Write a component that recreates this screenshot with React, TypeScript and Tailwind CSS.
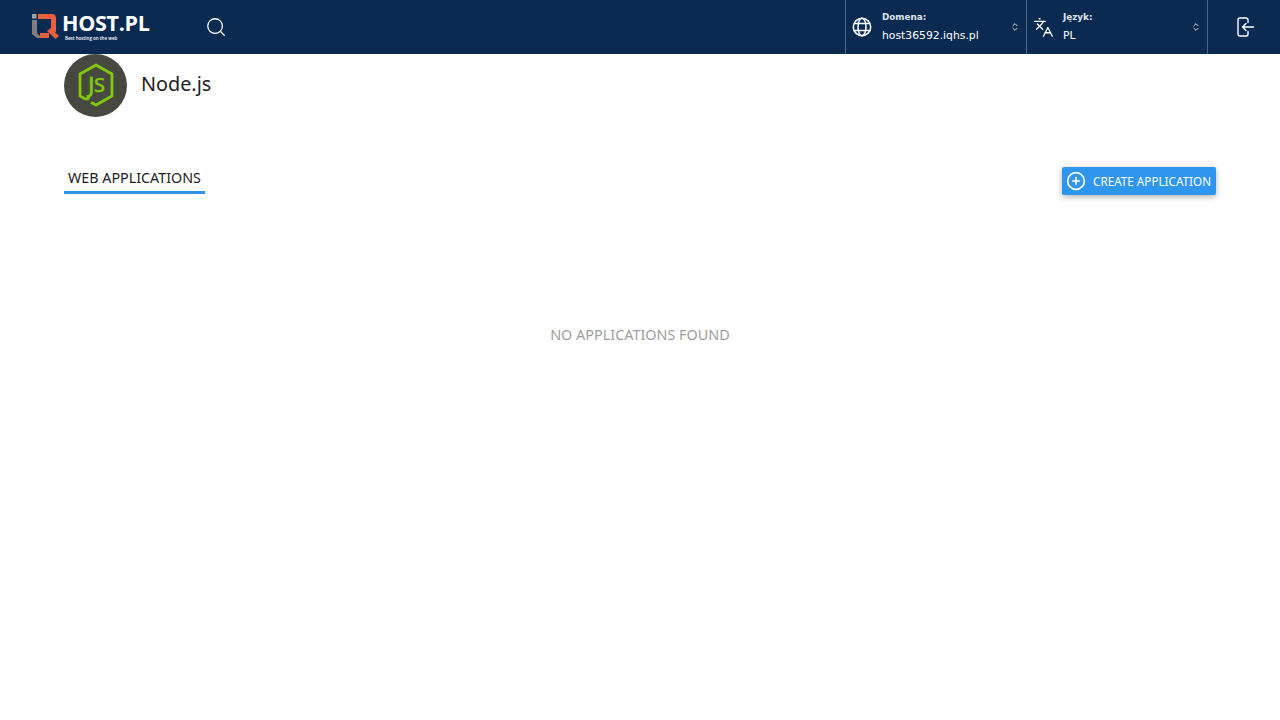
import { Languages, Search, ChevronsUpDown, CirclePlus } from "lucide-react";

// górny pasek: logo, szukaj, domena, język, wyloguj
function Logo() {
  return (
    <div className="flex w-[120px] items-center">
      <svg width="28" height="28" viewBox="0 0 28 28" fill="none" className="mr-[3px]">
        <rect x="1" y="1" width="4.5" height="4.5" fill="#a3a3a3" />
        <path d="M1 7h5v13l3 3v2H6l-5-4z" fill="#7f7f7f" />
        <path d="M7 1h14a4 4 0 0 1 4 4v14h-5V6H7z" fill="#e8603c" />
        <path d="M9 20h9v5H9z" fill="#e8603c" />
        <path d="M16 18l3.5-3 8.5 8-3.5 3z" fill="#e8603c" />
      </svg>
      <div className="flex flex-col font-['Open_Sans',sans-serif] text-white">
        <span className="text-[21.5px] leading-[20px] font-bold tracking-[-0.3px]">HOST.PL</span>
        <span className="mt-[2px] ml-[3px] text-[4.5px] leading-[6px] font-semibold">Best hosting on the web</span>
      </div>
    </div>
  );
}

function GlobeIcon() {
  return (
    <svg width="20" height="20" viewBox="0 0 20 20" fill="none" stroke="white" strokeWidth="1.5" className="-ml-px">
      <circle cx="10" cy="10" r="8.7" />
      <ellipse cx="10" cy="10" rx="4" ry="8.7" />
      <path d="M2.2 6.6h15.6M2.2 13.4h15.6" />
    </svg>
  );
}

function LogoutIcon() {
  return (
    <svg width="20" height="20" viewBox="0 0 20 20" fill="none" stroke="white" strokeWidth="1.4" strokeLinecap="round" strokeLinejoin="round" className="ml-[3px]">
      <path d="M12 5.5V3a2 2 0 0 0-2-2H4a2 2 0 0 0-2 2v14a2 2 0 0 0 2 2h6a2 2 0 0 0 2-2v-2.5" />
      <path d="M17.5 10H6.5M10 6.5L6.5 10l3.5 3.5" />
    </svg>
  );
}

function Selector({ icon, label, value, width, gap }: { icon: React.ReactNode; label: string; value: string; width: string; gap: string }) {
  return (
    <div className={`flex h-full items-center border-l border-[#4d6583] pr-[6px] pl-[7px] ${width}`}>
      {icon}
      <div className={`flex-1 font-['DejaVu_Sans',sans-serif] ${gap}`}>
        <div className="text-[8.8px] leading-[12px] font-bold text-[#dfe4ea]">{label}</div>
        <div className="mt-[5px] text-[10.8px] leading-[15px] text-white">{value}</div>
      </div>
      <ChevronsUpDown size={10} strokeWidth={2} className="text-white" />
    </div>
  );
}

export default function App() {
  return (
    <div className="min-h-[720px] bg-white font-['Noto_Sans',sans-serif]">
      <header className="flex h-[54px] items-center bg-[#0a2a52] pl-[31px]">
        <Logo />
        <button className="ml-[54px] text-white" aria-label="search">
          <Search size={22} strokeWidth={1.4} />
        </button>
        <div className="ml-auto flex h-full">
          <Selector
            icon={<GlobeIcon />}
            label="Domena:"
            value="host36592.iqhs.pl"
            width="w-[181px]"
            gap="ml-[10px]"
          />
          <Selector
            icon={<Languages size={21} strokeWidth={1.5} className="-ml-px text-white" />}
            label="Język:"
            value="PL"
            width="w-[181px]"
            gap="ml-[9px]"
          />
          <div className="flex h-full w-[73px] items-center justify-center border-l border-[#4d6583]">
            <LogoutIcon />
          </div>
        </div>
      </header>

      <main className="px-16">
        <div className="flex items-center">
          <div className="flex h-[63px] w-[63px] items-center justify-center rounded-full bg-[#47483f]">
            <svg width="63" height="63" viewBox="0 0 63 63" fill="none">
              <path
                d="M27 48.500L32 51l16-9V20L32 11 16 20v22l4.500 2.500Q24 46 25 43"
                stroke="#7fcb0c"
                strokeWidth="2.800"
                strokeLinejoin="round"
              />
              <text x="24" y="39" fontFamily="'DejaVu Sans',sans-serif" fontSize="22" stroke="#7fcb0c" strokeWidth="0.6" fill="#7fcb0c">
                J
              </text>
              <text x="30" y="38" fontFamily="'Noto Sans',sans-serif" fontSize="20" stroke="#7fcb0c" strokeWidth="0.6" fill="#7fcb0c">
                S
              </text>
            </svg>
          </div>
          <h1 className="mb-[3px] ml-[14px] text-[19.8px] leading-[28px] text-[#212121]">Node.js</h1>
        </div>

        <div className="mt-[50px] flex items-start justify-between">
          <div className="mt-px border-b-[3px] border-[#2f93ea] px-[4px] pb-[3px] text-[14.3px] leading-[20px] text-[#212121]">
            WEB APPLICATIONS
          </div>
          <button className="flex h-[28px] w-[154px] items-center rounded-[2px] bg-[#2f96ee] pl-[4px] text-[11.7px] text-white shadow-[0_2px_6px_rgba(0,0,0,0.3)]">
            <CirclePlus size={20} strokeWidth={2} />
            <span className="mt-px ml-[7px]">CREATE APPLICATION</span>
          </button>
        </div>

        <p className="mt-[130px] text-center text-[14.4px] leading-[20px] text-[#9e9e9e]">NO APPLICATIONS FOUND</p>
      </main>
    </div>
  );
}
